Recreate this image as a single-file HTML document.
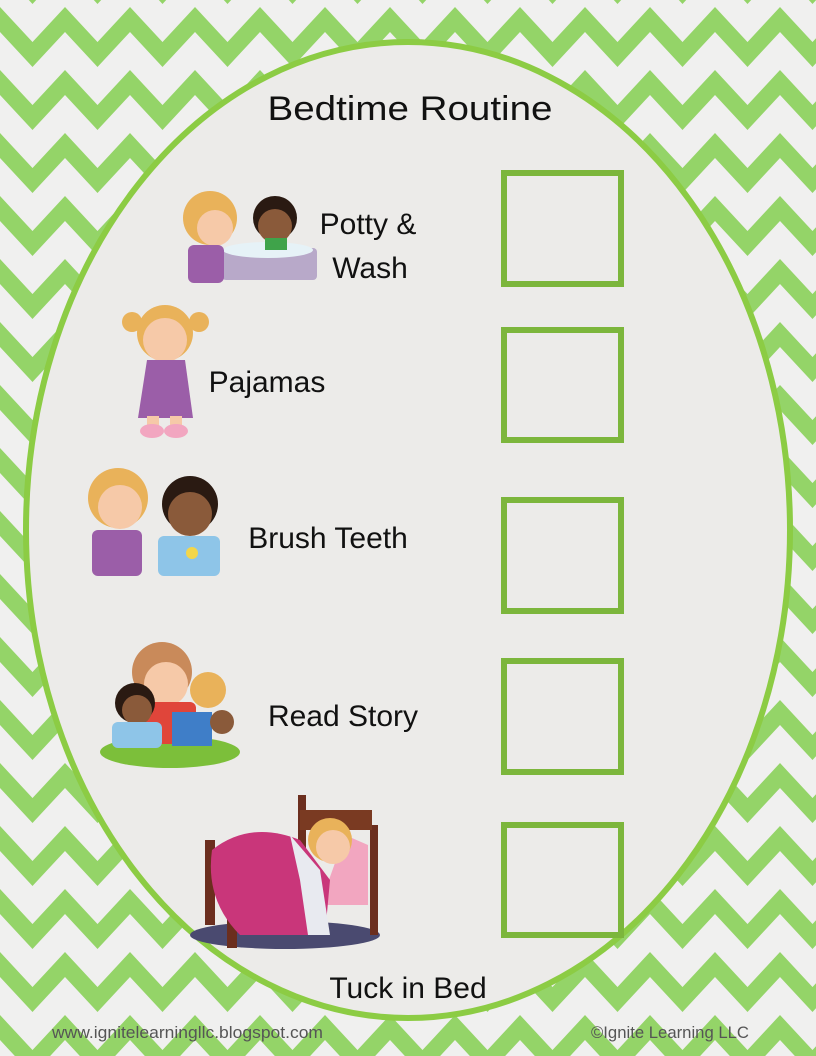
<!DOCTYPE html>
<html><head><meta charset="utf-8"><style>
html,body{margin:0;padding:0;width:816px;height:1056px;overflow:hidden;background:#f0f0ef}
svg{display:block}
.t{font-family:"Comic Sans MS","Liberation Sans",sans-serif;fill:#111}
</style></head><body>
<svg width="816" height="1056" viewBox="0 0 816 1056" xmlns="http://www.w3.org/2000/svg">
<defs>
<pattern id="chev" patternUnits="userSpaceOnUse" width="65" height="63" x="0" y="0">
<rect width="65" height="63" fill="#f0f0ef"/>
<g fill="none" stroke="#94d468" stroke-width="17" stroke-linejoin="miter">
<polyline points="-32.5,54.5 0,19.5 32.5,54.5 65,19.5 97.5,54.5"/>
<polyline points="-32.5,117.5 0,82.5 32.5,117.5 65,82.5 97.5,117.5"/>
<polyline points="-32.5,-8.5 0,-43.5 32.5,-8.5 65,-43.5 97.5,-8.5"/>
</g>
</pattern>
</defs>
<rect width="816" height="1056" fill="url(#chev)"/>
<ellipse cx="408" cy="530" rx="382" ry="488" fill="#ecebe9" stroke="#8ccc44" stroke-width="6"/>
<text class="t" x="410" y="120" font-size="34" text-anchor="middle" textLength="285" lengthAdjust="spacingAndGlyphs">Bedtime Routine</text>

<g fill="none" stroke="#7cb63c" stroke-width="6">
<rect x="504" y="173" width="117" height="111"/>
<rect x="504" y="330" width="117" height="110"/>
<rect x="504" y="500" width="117" height="111"/>
<rect x="504" y="661" width="117" height="111"/>
<rect x="504" y="825" width="117" height="110"/>
</g>

<text class="t" x="368" y="234" font-size="30" text-anchor="middle">Potty &amp;</text>
<text class="t" x="370" y="278" font-size="30" text-anchor="middle">Wash</text>
<text class="t" x="267" y="392" font-size="30" text-anchor="middle">Pajamas</text>
<text class="t" x="328" y="548" font-size="30" text-anchor="middle">Brush Teeth</text>
<text class="t" x="343" y="726" font-size="30" text-anchor="middle">Read Story</text>
<text class="t" x="408" y="998" font-size="30" text-anchor="middle">Tuck in Bed</text>

<g>
<rect x="222" y="248" width="95" height="32" rx="4" fill="#b8a9c9"/>
<ellipse cx="268" cy="250" rx="45" ry="8" fill="#e6f2f7"/>
<circle cx="210" cy="218" r="27" fill="#e9b25a"/>
<circle cx="215" cy="228" r="18" fill="#f6c9a8"/>
<rect x="188" y="245" width="36" height="38" rx="6" fill="#9b5ea8"/>
<circle cx="275" cy="218" r="22" fill="#2a1a12"/>
<circle cx="275" cy="226" r="17" fill="#8a5a3a"/>
<rect x="265" y="238" width="22" height="12" fill="#3fa34a"/>
</g>
<g>
<circle cx="165" cy="333" r="28" fill="#e9b25a"/>
<circle cx="165" cy="340" r="22" fill="#f6c9a8"/>
<circle cx="132" cy="322" r="10" fill="#e9b25a"/>
<circle cx="199" cy="322" r="10" fill="#e9b25a"/>
<path d="M147 360 L185 360 L193 418 L138 418 Z" fill="#9b5ea8"/>
<rect x="147" y="416" width="12" height="12" fill="#f6c9a8"/>
<rect x="170" y="416" width="12" height="12" fill="#f6c9a8"/>
<ellipse cx="152" cy="431" rx="12" ry="7" fill="#f2a6c0"/>
<ellipse cx="176" cy="431" rx="12" ry="7" fill="#f2a6c0"/>
</g>
<g>
<circle cx="118" cy="498" r="30" fill="#e9b25a"/>
<circle cx="120" cy="507" r="22" fill="#f6c9a8"/>
<rect x="92" y="530" width="50" height="46" rx="6" fill="#9b5ea8"/>
<circle cx="190" cy="504" r="28" fill="#2a1a12"/>
<circle cx="190" cy="514" r="22" fill="#8a5a3a"/>
<rect x="158" y="536" width="62" height="40" rx="6" fill="#8ec5e8"/>
<circle cx="192" cy="553" r="6" fill="#f3d64a"/>
</g>
<g>
<ellipse cx="170" cy="752" rx="70" ry="16" fill="#7cbf3a"/>
<circle cx="162" cy="672" r="30" fill="#c98a5a"/>
<circle cx="166" cy="684" r="22" fill="#f6c9a8"/>
<rect x="140" y="702" width="56" height="42" rx="6" fill="#e0453a"/>
<circle cx="135" cy="703" r="20" fill="#2a1a12"/>
<circle cx="137" cy="710" r="15" fill="#8a5a3a"/>
<rect x="112" y="722" width="50" height="26" rx="6" fill="#8ec5e8"/>
<circle cx="208" cy="690" r="18" fill="#e9b25a"/>
<rect x="172" y="712" width="40" height="34" fill="#3f7ec8"/>
<circle cx="222" cy="722" r="12" fill="#8a5a3a"/>
</g>
<g>
<ellipse cx="285" cy="935" rx="95" ry="14" fill="#4a4a70"/>
<rect x="205" y="840" width="10" height="85" fill="#6b2e1e"/>
<rect x="227" y="860" width="10" height="88" fill="#6b2e1e"/>
<rect x="298" y="795" width="8" height="60" fill="#6b2e1e"/>
<rect x="370" y="825" width="8" height="110" fill="#6b2e1e"/>
<rect x="300" y="810" width="72" height="20" fill="#7a3a22"/>
<path d="M345 835 L368 845 L368 905 L320 905 Z" fill="#f2a6c0"/>
<circle cx="330" cy="840" r="22" fill="#e9b25a"/>
<circle cx="333" cy="847" r="17" fill="#f6c9a8"/>
<path d="M212 850 Q250 820 300 840 L330 880 L325 935 L240 935 Q205 900 212 850 Z" fill="#c9367a"/>
<path d="M290 835 L320 870 L330 935 L308 935 L300 880 Z" fill="#e8eaf0"/>
</g>

<text x="52" y="1038" font-family="Liberation Sans, sans-serif" font-size="17" fill="#555" textLength="271" lengthAdjust="spacingAndGlyphs">www.ignitelearningllc.blogspot.com</text>
<text x="591" y="1038" font-family="Liberation Sans, sans-serif" font-size="17" fill="#555" textLength="158" lengthAdjust="spacingAndGlyphs">©Ignite Learning LLC</text>
</svg>
</body></html>
